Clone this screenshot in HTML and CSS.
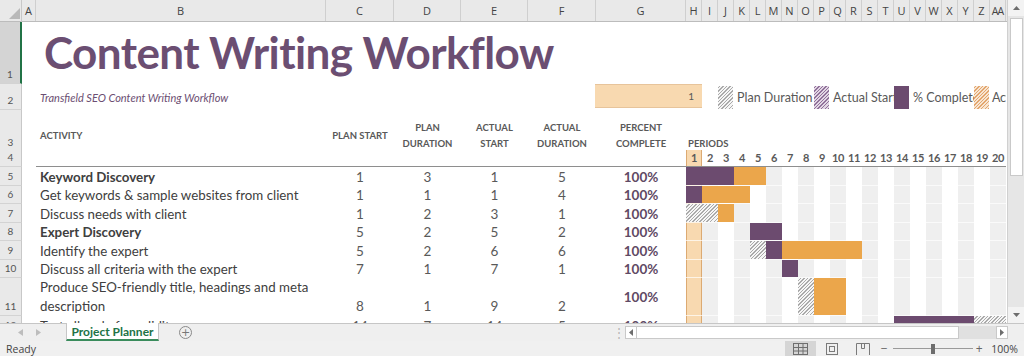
FILE: index.html
```html
<!DOCTYPE html>
<html>
<head>
<meta charset="utf-8">
<title>Project Planner</title>
<link rel="stylesheet" href="styles.css">
</head>
<body>
<div class="app">
  <div class="main">
    <div class="sheet">
      <div class="row colhead">
        <div class="corner"><svg width="22" height="22" viewBox="0 0 22 22"><polygon points="20,8 20,19 9,19" fill="#b9b9b9"/></svg></div>
        <div class="ch">A</div>
        <div class="ch">B</div>
        <div class="ch">C</div>
        <div class="ch">D</div>
        <div class="ch">E</div>
        <div class="ch">F</div>
        <div class="ch">G</div>
        <div class="g">
          <div class="ch">H</div><div class="ch">I</div><div class="ch">J</div><div class="ch">K</div><div class="ch">L</div>
          <div class="ch">M</div><div class="ch">N</div><div class="ch">O</div><div class="ch">P</div><div class="ch">Q</div>
          <div class="ch">R</div><div class="ch">S</div><div class="ch">T</div><div class="ch">U</div><div class="ch">V</div>
          <div class="ch">W</div><div class="ch">X</div><div class="ch">Y</div><div class="ch">Z</div><div class="ch aa">AA</div>
        </div>
      </div>

      <div class="row r1">
        <div class="rh sel">1</div><div></div>
        <div class="title">Content Writing Workflow</div>
        <div></div><div></div><div></div><div></div><div></div><div></div>
      </div>

      <div class="row r2">
        <div class="rh">2</div><div></div>
        <div class="subtitle">Transfield SEO Content Writing Workflow</div>
        <div></div><div></div><div></div><div></div>
        <div class="gcell"><div class="input">1</div></div>
        <div class="g legend">
          <div class="sw plan" style="grid-column:3"></div>
          <div class="lbl" style="grid-column:4 / 9">Plan Duration</div>
          <div class="sw astart" style="grid-column:9"></div>
          <div class="lbl" style="grid-column:10 / 14">Actual Start</div>
          <div class="sw done" style="grid-column:14"></div>
          <div class="lbl" style="grid-column:15 / 19">% Complete</div>
          <div class="sw over" style="grid-column:19"></div>
          <div class="lbl last" style="grid-column:20 / 21">Actual (beyond plan)</div>
        </div>
      </div>

      <div class="row r3">
        <div class="rh">3</div><div></div>
        <div class="hd left">ACTIVITY</div>
        <div class="hd">PLAN START</div>
        <div class="hd">PLAN<br>DURATION</div>
        <div class="hd">ACTUAL<br>START</div>
        <div class="hd">ACTUAL<br>DURATION</div>
        <div class="hd">PERCENT<br>COMPLETE</div>
        <div class="periods">PERIODS</div>
      </div>

      <div class="row r4">
        <div class="rh">4</div><div></div>
        <div></div><div></div><div></div><div></div><div></div><div></div>
        <div class="g pnums">
          <div class="cur">1</div><div>2</div><div>3</div><div>4</div><div>5</div><div>6</div><div>7</div>
          <div>8</div><div>9</div><div>10</div><div>11</div><div>12</div><div>13</div><div>14</div>
          <div>15</div><div>16</div><div>17</div><div>18</div><div>19</div><div>20</div>
        </div>
      </div>

      <div class="row data h19">
        <div class="rh">5</div><div></div>
        <div class="act bold">Keyword Discovery</div>
        <div class="num">1</div><div class="num">3</div><div class="num">1</div><div class="num">5</div>
        <div class="pct">100%</div>
        <div class="g gs">
          <div class="bar done" style="grid-column:1 / span 3"></div>
          <div class="bar over" style="grid-column:4 / span 2"></div>
        </div>
      </div>

      <div class="row data h18">
        <div class="rh">6</div><div></div>
        <div class="act">Get keywords &amp; sample websites from client</div>
        <div class="num">1</div><div class="num">1</div><div class="num">1</div><div class="num">4</div>
        <div class="pct">100%</div>
        <div class="g gs">
          <div class="bar done" style="grid-column:1 / span 1"></div>
          <div class="bar over" style="grid-column:2 / span 3"></div>
        </div>
      </div>

      <div class="row data h19">
        <div class="rh">7</div><div></div>
        <div class="act">Discuss needs with client</div>
        <div class="num">1</div><div class="num">2</div><div class="num">3</div><div class="num">1</div>
        <div class="pct">100%</div>
        <div class="g gs">
          <div class="bar plan" style="grid-column:1 / span 2"></div>
          <div class="bar over" style="grid-column:3 / span 1"></div>
        </div>
      </div>

      <div class="row data h18">
        <div class="rh">8</div><div></div>
        <div class="act bold">Expert Discovery</div>
        <div class="num">5</div><div class="num">2</div><div class="num">5</div><div class="num">2</div>
        <div class="pct">100%</div>
        <div class="g gs">
          <div class="bar done" style="grid-column:5 / span 2"></div>
        </div>
      </div>

      <div class="row data h19">
        <div class="rh">9</div><div></div>
        <div class="act">Identify the expert</div>
        <div class="num">5</div><div class="num">2</div><div class="num">6</div><div class="num">6</div>
        <div class="pct">100%</div>
        <div class="g gs">
          <div class="bar plan" style="grid-column:5 / span 1"></div>
          <div class="bar done" style="grid-column:6 / span 1"></div>
          <div class="bar over" style="grid-column:7 / span 5"></div>
        </div>
      </div>

      <div class="row data h18">
        <div class="rh">10</div><div></div>
        <div class="act">Discuss all criteria with the expert</div>
        <div class="num">7</div><div class="num">1</div><div class="num">7</div><div class="num">1</div>
        <div class="pct">100%</div>
        <div class="g gs">
          <div class="bar done" style="grid-column:7 / span 1"></div>
        </div>
      </div>

      <div class="row data tall">
        <div class="rh">11</div><div></div>
        <div class="act wrap">Produce SEO-friendly title, headings and meta description</div>
        <div class="num low">8</div><div class="num low">1</div><div class="num low">9</div><div class="num low">2</div>
        <div class="pct">100%</div>
        <div class="g gs">
          <div class="bar plan" style="grid-column:8 / span 1"></div>
          <div class="bar over" style="grid-column:9 / span 2"></div>
        </div>
      </div>

      <div class="row data h19">
        <div class="rh">12</div><div></div>
        <div class="act">Test all code for validity</div>
        <div class="num">14</div><div class="num">7</div><div class="num">14</div><div class="num">5</div>
        <div class="pct">100%</div>
        <div class="g gs">
          <div class="bar done" style="grid-column:14 / span 5"></div>
          <div class="bar plan" style="grid-column:19 / span 2"></div>
        </div>
      </div>
    </div>

    <div class="vscroll">
      <div class="vbtn"><svg width="7" height="4" viewBox="0 0 7 4"><polygon points="0,4 3.5,0 7,4" fill="#6d6d6d"/></svg></div>
      <div class="vthumb"></div>
      <div class="vtrack"></div>
      <div class="vbtn"><svg width="7" height="4" viewBox="0 0 7 4"><polygon points="0,0 7,0 3.5,4" fill="#6d6d6d"/></svg></div>
    </div>
  </div>

  <div class="tabbar">
    <div class="navs">
      <svg width="5" height="7" viewBox="0 0 5 7"><polygon points="5,0 5,7 0,3.5" fill="#bdbdbd"/></svg>
      <svg width="5" height="7" viewBox="0 0 5 7"><polygon points="0,0 0,7 5,3.5" fill="#bdbdbd"/></svg>
    </div>
    <div class="tab">Project Planner</div>
    <div class="add">+</div>
    <div class="spacer"></div>
    <div class="dots">&#8942;</div>
    <div class="hscroll">
      <div class="hbtn"><svg width="4" height="7" viewBox="0 0 4 7"><polygon points="4,0 4,7 0,3.5" fill="#6d6d6d"/></svg></div>
      <div class="hthumb"></div>
      <div class="htrack"></div>
      <div class="hbtn"><svg width="4" height="7" viewBox="0 0 4 7"><polygon points="0,0 0,7 4,3.5" fill="#6d6d6d"/></svg></div>
    </div>
  </div>

  <div class="status">
    <div class="ready">Ready</div>
    <div class="spacer"></div>
    <div class="vbtns">
      <div class="vb active"><svg width="15" height="12" viewBox="0 0 15 12"><rect x="0.5" y="0.5" width="14" height="11" fill="none" stroke="#6e6e6e"/><path d="M0 4.5h15M0 8h15M5.5 0v12M10 0v12" stroke="#6e6e6e" fill="none"/></svg></div>
      <div class="vb"><svg width="12" height="12" viewBox="0 0 12 12"><rect x="0.5" y="0.5" width="11" height="11" fill="none" stroke="#7a7a7a"/><rect x="3.5" y="3.5" width="5" height="5" fill="none" stroke="#7a7a7a"/></svg></div>
      <div class="vb"><svg width="14" height="12" viewBox="0 0 14 12"><path d="M0.5 12V0.5h13V12M5.5 0.5v5h3v-5" fill="none" stroke="#7a7a7a"/></svg></div>
    </div>
    <div class="zoom">
      <span class="zm">&minus;</span>
      <div class="slider"><div class="knob"></div></div>
      <span class="zm">+</span>
      <span class="zpct">100%</span>
    </div>
  </div>
</div>
</body>
</html>
```

FILE: styles.css
```css
* {
  box-sizing: border-box;
  margin: 0;
  padding: 0;
}

body {
  width: 1024px;
  height: 356px;
  overflow: hidden;
  background: #ffffff;
  font-family: Lato, "Liberation Sans", sans-serif;
  color: #404040;
}

.app {
  display: flex;
  flex-direction: column;
  height: 356px;
}

.main {
  display: flex;
  height: 323px;
}

.sheet {
  width: 1007px;
  height: 323px;
  overflow: hidden;
}

.row {
  display: grid;
  grid-template-columns: 22px 14px 290px 68px 67px 67px 68px 90px 320px;
}

.g {
  display: grid;
  grid-template-columns: repeat(20, 16px);
}

/* column headers */
.colhead {
  height: 22px;
  background: #e9e9e9;
  border-bottom: 1px solid #bcbcbc;
}

.corner {
  border-right: 1px solid #c8c8c8;
}

.ch {
  display: flex;
  align-items: center;
  justify-content: center;
  font-family: "Open Sans", "Liberation Sans", sans-serif;
  font-size: 11px;
  color: #444444;
  border-right: 1px solid #cfcfcf;
  height: 21px;
  overflow: hidden;
  white-space: nowrap;
}

.ch.aa {
  letter-spacing: -1px;
  font-size: 10.5px;
}

/* row headers */
.rh {
  display: flex;
  align-items: flex-end;
  justify-content: center;
  padding-bottom: 3px;
  background: #e9e9e9;
  border-right: 1px solid #c8c8c8;
  border-bottom: 1px solid #d3d3d3;
  font-size: 10px;
  color: #555555;
}

.rh.sel {
  background: #d4d4d4;
  border-right: 2px solid #217346;
}

/* row 1 */
.r1 {
  height: 62px;
}

.title {
  padding: 8px 0 0 8px;
  font-size: 44px;
  line-height: 44px;
  font-weight: 700;
  color: #6b4e72;
  white-space: nowrap;
  letter-spacing: -0.55px;
}

/* row 2 */
.r2 {
  height: 26px;
}

.subtitle {
  display: flex;
  align-items: center;
  padding-left: 4px;
  font-size: 11px;
  font-style: italic;
  color: #6b4e72;
  white-space: nowrap;
}

.input {
  width: 107px;
  height: 24px;
  margin-left: -1px;
  background: #f8d9b0;
  border-top: 1px solid #e7c49b;
  border-bottom: 1px solid #e7c49b;
  display: flex;
  align-items: center;
  justify-content: flex-end;
  padding-right: 8px;
  font-size: 10px;
  color: #595959;
  position: relative;
  z-index: 1;
}

.legend {
  align-items: center;
}

.sw {
  width: 15px;
  height: 23px;
}

.lbl {
  font-size: 12.5px;
  color: #595959;
  white-space: nowrap;
  overflow: hidden;
  padding-left: 3px;
  line-height: 23px;
}

.lbl.last {
  padding-left: 2px;
  letter-spacing: -0.3px;
}

/* row 3 */
.r3 {
  height: 40px;
}

.hd {
  display: flex;
  align-items: center;
  justify-content: center;
  text-align: center;
  padding-top: 10px;
  font-size: 9.5px;
  font-weight: 700;
  line-height: 16px;
  color: #595959;
  white-space: nowrap;
}

.hd.left {
  justify-content: flex-start;
  padding-left: 4px;
}

.periods {
  display: flex;
  align-items: flex-end;
  padding: 0 0 2px 2px;
  font-size: 9.5px;
  line-height: 12px;
  font-weight: 700;
  color: #595959;
}

/* row 4 */
.r4 {
  height: 17px;
}

.r4 > :nth-child(n+3) {
  border-bottom: 1px solid #8e8e8e;
}

.pnums > div {
  display: flex;
  align-items: center;
  justify-content: center;
  font-size: 11px;
  line-height: 14px;
  font-weight: 700;
  color: #595959;
  letter-spacing: -0.3px;
}

.pnums > .cur {
  background: #f8d9b0;
  border-left: 1px solid #dcaa72;
  border-right: 1px solid #dcaa72;
}

/* data rows */
.h18 {
  height: 18px;
}

.h19 {
  height: 19px;
}

.tall {
  height: 38px;
}

.act {
  display: flex;
  align-items: center;
  padding-left: 4px;
  font-size: 13.3px;
  color: #404040;
  white-space: nowrap;
}

.act.bold {
  font-weight: 700;
}

.act.wrap {
  white-space: normal;
  align-items: flex-start;
  line-height: 19px;
}

.num {
  display: flex;
  align-items: center;
  justify-content: center;
  font-size: 13.5px;
  color: #595959;
}

.num.low {
  align-items: flex-end;
  line-height: 19px;
}

.pct {
  display: flex;
  align-items: center;
  justify-content: center;
  font-size: 13.5px;
  font-weight: 700;
  color: #5f4a65;
}

.gs {
  background:
    linear-gradient(90deg, #dcaa72 0 1px, #f8d9b0 1px 15px, #dcaa72 15px 16px, transparent 16px),
    repeating-linear-gradient(90deg, #ffffff 0 16px, #efefef 16px 32px);
  border-bottom: 1px solid rgba(255, 255, 255, 0.7);
}

.bar {
  grid-row: 1;
  height: 100%;
}

.done {
  background: #6c4b6f;
}

.over {
  background: #eba64b;
}

.plan {
  background: repeating-linear-gradient(-45deg, #aaaaaa 0 1px, #f6f6f6 1px 2.5px);
}

.astart {
  background: repeating-linear-gradient(-45deg, #90719a 0 1px, #e2d6e4 1px 2.5px);
}

.sw.over {
  background: repeating-linear-gradient(-45deg, #e2a66e 0 1px, #f8e5d2 1px 2.5px);
}

/* vertical scrollbar */
.vscroll {
  width: 17px;
  display: flex;
  flex-direction: column;
  background: #e6e6e6;
  border-left: 1px solid #d0d0d0;
}

.vbtn {
  height: 16px;
  display: flex;
  align-items: center;
  justify-content: center;
  background: #f3f3f3;
}

.vthumb {
  height: 158px;
  margin: 2px 1px 0 2px;
  background: #ffffff;
  border: 1px solid #c9c9c9;
}

.vtrack {
  flex: 1;
}

/* sheet tabs */
.tabbar {
  height: 18px;
  display: flex;
  align-items: stretch;
  background: #efefef;
  border-top: 1px solid #c6c6c6;
}

.navs {
  width: 66px;
  display: flex;
  align-items: center;
  gap: 13px;
  padding-left: 18px;
}

.tab {
  width: 93px;
  display: flex;
  align-items: center;
  justify-content: center;
  background: #ffffff;
  border-left: 1px solid #c6c6c6;
  border-right: 1px solid #c6c6c6;
  border-bottom: 2px solid #3a8c5c;
  margin-top: -1px;
  font-size: 12px;
  font-weight: 700;
  color: #217346;
}

.add {
  width: 13px;
  height: 13px;
  margin: 2px 0 0 20px;
  border: 1px solid #8a8a8a;
  border-radius: 50%;
  display: flex;
  align-items: center;
  justify-content: center;
  font-size: 11px;
  line-height: 11px;
  color: #777777;
  font-family: "DejaVu Sans", sans-serif;
}

.spacer {
  flex: 1;
}

.dots {
  width: 13px;
  display: flex;
  align-items: center;
  justify-content: center;
  color: #b5b5b5;
  font-size: 12px;
}

.hscroll {
  width: 383px;
  margin: 2px 16px 2px 0;
  display: flex;
  background: #e0e0e0;
}

.hbtn {
  width: 12px;
  display: flex;
  align-items: center;
  justify-content: center;
  background: #ffffff;
  border: 1px solid #c9c9c9;
}

.hthumb {
  width: 322px;
  background: #ffffff;
  border: 1px solid #c9c9c9;
  border-left: none;
}

.htrack {
  flex: 1;
}

/* status bar */
.status {
  height: 15px;
  flex: 1;
  display: flex;
  align-items: stretch;
  background: #f0f0f0;
  font-family: "Open Sans", "Liberation Sans", sans-serif;
  font-size: 10.5px;
  color: #444444;
}

.ready {
  display: flex;
  align-items: center;
  padding-left: 6px;
}

.vbtns {
  display: flex;
}

.vb {
  width: 31px;
  display: flex;
  align-items: center;
  justify-content: center;
}

.vb.active {
  background: #d5d5d5;
}

.zoom {
  display: flex;
  align-items: center;
  padding-right: 6px;
}

.zm {
  width: 12px;
  text-align: center;
  color: #666666;
  font-size: 12px;
}

.slider {
  width: 80px;
  height: 1px;
  margin-left: 3px;
  background: #9a9a9a;
  display: flex;
  justify-content: center;
  align-items: center;
}

.knob {
  width: 4px;
  height: 10px;
  background: #6d6d6d;
}

.zpct {
  margin-left: 6px;
}
```
